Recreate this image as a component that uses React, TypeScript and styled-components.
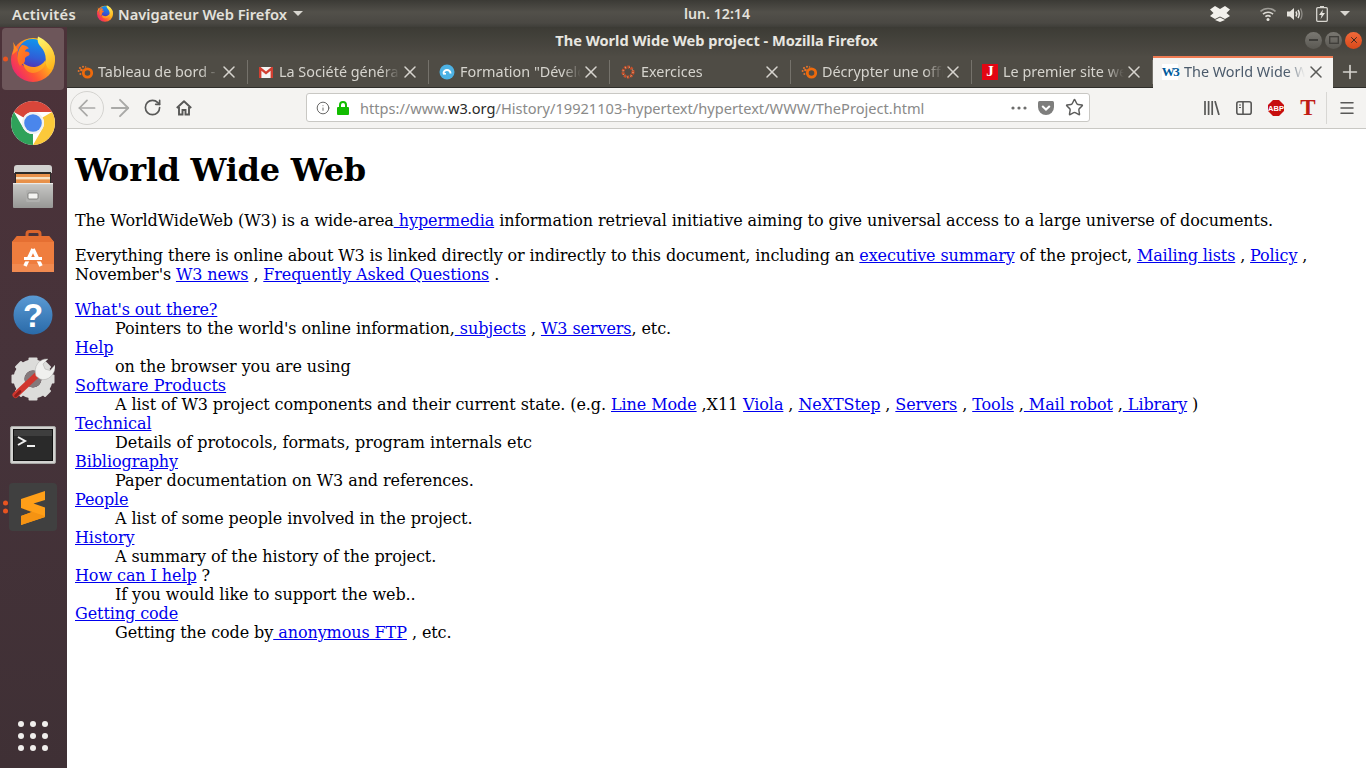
import React from "react";
import styled, { createGlobalStyle } from "styled-components";
import { ArrowLeft, ArrowRight, RotateCw, Info, Star, Menu, Plus, X } from "lucide-react";

const GlobalStyle = createGlobalStyle`
  html, body {
    margin: 0;
    padding: 0;
    height: 100%;
    overflow: hidden;
  }
`;

const UI_FONT = `"Noto Sans", "Open Sans", sans-serif`;

const Screen = styled.div`
  width: 1366px;
  height: 768px;
  display: flex;
  flex-direction: column;
  overflow: hidden;
  font-family: ${UI_FONT};
`;

const TopBar = styled.header`
  height: 27px;
  flex: none;
  display: flex;
  align-items: center;
  color: #e4e2dc;
  font-size: 14.7px;
  font-weight: 600;
  background: linear-gradient(#3b3a35 0, #52504a 45%, #4a4843 85%, #3f3e39 100%);
`;

const TopLeft = styled.div`
  flex: 0 0 684px;
  display: flex;
  align-items: center;
  padding-left: 12px;
  box-sizing: border-box;
`;

const Activities = styled.span`
  letter-spacing: 0.3px;
`;

const AppName = styled.div`
  margin-left: 21px;
  display: flex;
  align-items: center;
  gap: 5px;
`;

const Clock = styled.span`
  font-size: 14.2px;
`;

const Caret = styled.span`
  width: 0;
  height: 0;
  margin-left: ${(p: { $gap?: number }) => p.$gap ?? 0}px;
  border-left: 5px solid transparent;
  border-right: 5px solid transparent;
  border-top: 5px solid #d8d6d0;
`;

const Tray = styled.div`
  margin-left: auto;
  display: flex;
  align-items: center;
  padding-right: 13px;
`;

const Body = styled.div`
  flex: 1;
  display: flex;
  min-height: 0;
`;

const Dock = styled.nav`
  width: 67px;
  flex: none;
  box-sizing: border-box;
  padding: 1px 3px 1px 2px;
  display: flex;
  flex-direction: column;
  gap: 2px;
  background: linear-gradient(#4c3239, #46333a 50%, #3f3035);
`;

const DockItem = styled.div<{ $active?: boolean; $bottom?: boolean; $nudge?: number }>`
  position: relative;
  height: 62px;
  flex: none;
  box-sizing: border-box;
  padding-top: ${(p) => p.$nudge ?? 0}px;
  display: flex;
  align-items: center;
  justify-content: center;
  border-radius: 4px;
  margin-top: ${(p) => (p.$bottom ? "auto" : "0")};
  background: ${(p) => (p.$active ? "#6d565a" : "transparent")};
`;

const RunDots = styled.div`
  position: absolute;
  left: 0;
  top: 50%;
  transform: translateY(-50%);
  display: flex;
  flex-direction: column;
  gap: 3px;
`;

const RunDot = styled.span`
  display: block;
  width: 5px;
  height: 5px;
  margin-left: 0.5px;
  border-radius: 50%;
  background: #e95420;
`;

const AppsGrid = styled.div`
  display: grid;
  grid-template-columns: repeat(3, 6px);
  gap: 6px;
`;

const AppsDot = styled.span`
  width: 6px;
  height: 6px;
  border-radius: 50%;
  background: #f0eeec;
`;

const Window = styled.main`
  flex: 1;
  min-width: 0;
  display: flex;
  flex-direction: column;
`;

const TitleBar = styled.div`
  height: 29px;
  flex: none;
  display: grid;
  grid-template-columns: 1fr auto 1fr;
  align-items: center;
  background: linear-gradient(#3c3b35, #4e4b44);
`;

const Title = styled.div`
  color: #e8e6e0;
  font-size: 14.6px;
  font-weight: 700;
  margin-top: -4px;
`;

const WinButtons = styled.div`
  justify-self: end;
  display: flex;
  gap: 3px;
  padding-right: 4px;
  margin-top: -3px;
`;

const WinButton = styled.span<{ $close?: boolean }>`
  width: 17px;
  height: 17px;
  border-radius: 50%;
  display: flex;
  align-items: center;
  justify-content: center;
  box-sizing: border-box;
  background: ${(p) =>
    p.$close ? "linear-gradient(#f0693a, #d9491a)" : "linear-gradient(#7a7872, #5a5852)"};
`;

const TabStrip = styled.div`
  height: 32px;
  flex: none;
  display: flex;
  background: #4f4c45;
  border-bottom: 1px solid #2f2e2a;
  box-sizing: border-box;
`;

const Tab = styled.div<{ $active?: boolean }>`
  position: relative;
  flex: 0 0 ${(p) => (p.$active ? 180 : 181)}px;
  box-sizing: border-box;
  display: flex;
  align-items: center;
  padding-left: ${(p) => (p.$active ? 9 : 10)}px;
  padding-bottom: ${(p) => (p.$active ? 3 : 0)}px;
  height: ${(p) => (p.$active ? "32px" : "31px")};
  font-size: 14.4px;
  color: ${(p) => (p.$active ? "#4b5a6b" : "#d6d4ce")};
  background: ${(p) => (p.$active ? "#f4f3f1" : "transparent")};
  border-top: ${(p) => (p.$active ? "2px solid #ef7b53" : "none")};
  &::after {
    content: "";
    display: ${(p) => (p.$active ? "none" : "block")};
    position: absolute;
    right: 0;
    top: 4px;
    bottom: 3px;
    width: 1px;
    background: #75726b;
  }
`;

const TabFavicon = styled.span`
  width: 16px;
  height: 16px;
  flex: none;
  display: flex;
`;

const TabTitle = styled.span<{ $active?: boolean }>`
  margin-left: ${(p) => (p.$active ? 6 : 5)}px;
  width: 121px;
  flex: none;
  white-space: nowrap;
  overflow: hidden;
  -webkit-mask-image: linear-gradient(90deg, #000 85%, transparent 100%);
  mask-image: linear-gradient(90deg, #000 85%, transparent 100%);
`;

const TabClose = styled.span<{ $dark?: boolean }>`
  margin-left: ${(p) => (p.$dark ? 1 : 0)}px;
  display: flex;
  color: ${(p) => (p.$dark ? "#5a5a58" : "#d6d4ce")};
`;

const NewTab = styled.div`
  flex: 1;
  display: flex;
  align-items: center;
  justify-content: center;
  color: #d6d4ce;
`;

const Toolbar = styled.div`
  height: 41px;
  flex: none;
  box-sizing: border-box;
  display: flex;
  align-items: center;
  padding: 0 3px 1px 3px;
  background: #f4f3f1;
  border-bottom: 1px solid #c9c8c4;
`;

const ToolButton = styled.span<{ $muted?: boolean; $round?: boolean }>`
  width: ${(p) => (p.$round ? "34px" : "32px")};
  height: ${(p) => (p.$round ? "34px" : "32px")};
  flex: none;
  box-sizing: border-box;
  display: flex;
  align-items: center;
  justify-content: center;
  border-radius: 50%;
  border: ${(p) => (p.$round ? "1px solid #d4d3d0" : "none")};
  color: ${(p) => (p.$muted ? "#a9a9a7" : "#585857")};
`;

const UrlBar = styled.div`
  width: 784px;
  height: 29px;
  margin: 0 106px;
  flex: none;
  box-sizing: border-box;
  display: flex;
  align-items: center;
  background: #fff;
  border: 1px solid #c9c8c4;
  border-radius: 3px;
  padding-left: 9px;
  color: #5c5c5b;
`;

const UrlGap = styled.span`
  width: 7px;
  flex: none;
`;

const UrlText = styled.span`
  margin-left: 11px;
  font-size: 14.6px;
  color: #8a8a89;
  white-space: nowrap;
`;

const UrlHost = styled.span`
  color: #2a2a2a;
`;

const UrlActions = styled.div`
  margin-left: auto;
  display: flex;
  align-items: center;
  gap: 11px;
  padding-right: 5px;
`;

const ToolSeparator = styled.span`
  width: 1px;
  height: 32px;
  flex: none;
  margin-left: 2px;
  margin-right: 4px;
  background: #d8d7d4;
`;

const Page = styled.article`
  flex: 1;
  background: #fff;
  color: #000;
  padding: 0.1px 8px;
  font-family: "DejaVu Serif", serif;
  font-size: 16px;
  letter-spacing: -0.085px;
  min-height: 0;
  overflow: hidden;
`;

const Heading = styled.h1`
  font-size: 32px;
  font-weight: 700;
  letter-spacing: -0.27px;
  margin: 21.44px 0 22.44px;
`;

const Para = styled.p<{ $tracking?: number }>`
  margin: 16px 0;
  letter-spacing: ${(p) => p.$tracking ?? -0.085}px;
`;

const Link = styled.a`
  color: #0000ee;
  text-decoration: underline;
`;

const Topics = styled.dl`
  margin: 16px 0;
`;

const Term = styled.dt<{ $tracking?: number }>`
  letter-spacing: ${(p) => p.$tracking ?? -0.085}px;
`;

const Desc = styled.dd<{ $tracking?: number }>`
  margin-left: 40px;
  letter-spacing: ${(p) => p.$tracking ?? -0.085}px;
`;

const FirefoxLogo = ({ size, uid }: { size: number; uid: string }) => (
  <svg width={size} height={(size * 46) / 44} viewBox="0 0 44 46">
    <defs>
      <linearGradient id={`${uid}a`} x1="0.95" y1="0.15" x2="0.1" y2="0.8">
        <stop offset="0" stopColor="#ffdc24" />
        <stop offset="0.4" stopColor="#ffa41e" />
        <stop offset="0.72" stopColor="#ff5434" />
        <stop offset="1" stopColor="#ee2a6a" />
      </linearGradient>
      <linearGradient id={`${uid}b`} x1="0.6" y1="0" x2="0.4" y2="1">
        <stop offset="0" stopColor="#0f96ee" />
        <stop offset="0.6" stopColor="#2f5fd8" />
        <stop offset="1" stopColor="#5a2cae" />
      </linearGradient>
      <linearGradient id={`${uid}c`} x1="0.3" y1="0" x2="0.6" y2="1">
        <stop offset="0" stopColor="#fff36a" />
        <stop offset="1" stopColor="#ffb81e" />
      </linearGradient>
      <linearGradient id={`${uid}d`} x1="0" y1="0" x2="1" y2="1">
        <stop offset="0" stopColor="#ff8a1e" />
        <stop offset="1" stopColor="#ff5a2a" />
      </linearGradient>
      <linearGradient id={`${uid}e`} x1="1" y1="0" x2="0" y2="1">
        <stop offset="0" stopColor="#ffc020" />
        <stop offset="1" stopColor="#ff7a24" />
      </linearGradient>
    </defs>
    <circle cx="22" cy="24" r="22" fill={`url(#${uid}a)`} />
    <path d="M2 6C3 10 3 14 1 19L7 14Z" fill="#ff8a24" />
    <circle cx="21.5" cy="18" r="15" fill={`url(#${uid}b)`} />
    <path d="M11 9C14 9 16.5 10.5 18 12.5C15.5 12.5 14 14 14 15.5C16.5 15 19 16 18.5 18.5C18 20 15.5 20 14 22C14 24 14 26 13 27L9 30C5 24 6 14 11 9Z" fill={`url(#${uid}d)`} />
    <path d="M12 27C16 30 20 31.5 24 31C28 30.5 32 28 34.5 24C35 31 30 36 22 37C17 37 13 33 12 27Z" fill={`url(#${uid}e)`} />
    <path d="M27 0.5C26 5 27 8 30 11C33.5 15 35.5 20 34.5 27C36 32 38 34 40 33C43 29 44.3 25 43.7 21C42 11 35 4 27 0.5Z" fill={`url(#${uid}c)`} />
  </svg>
);

const ChromeLogo = () => {
  const sector = "M5 13A22 22 0 0 1 43 13L24 13A11 11 0 0 0 14.5 18.5Z";
  return (
    <svg width="48" height="48" viewBox="0 0 48 48">
      <circle cx="24" cy="24" r="22" fill="#fff" />
      <path d={sector} fill="#d8463a" />
      <path d={sector} fill="#fbc93a" transform="rotate(120 24 24)" />
      <path d={sector} fill="#2fa25a" transform="rotate(240 24 24)" />
      <circle cx="24" cy="24" r="11" fill="#f1f1f1" />
      <circle cx="24" cy="24" r="8.8" fill="#4a86ec" />
    </svg>
  );
};

const FilesIcon = () => (
  <svg width="42" height="44" viewBox="0 0 42 44">
    <defs>
      <linearGradient id="cab" x1="0" y1="0" x2="0" y2="1">
        <stop offset="0" stopColor="#c9c9c7" />
        <stop offset="1" stopColor="#979795" />
      </linearGradient>
    </defs>
    <path d="M2 3Q2 0 5 0H37Q40 0 40 3V8H2Z" fill="#d2d2d0" />
    <rect x="3" y="7" width="36" height="12" fill="#2c2a28" />
    <rect x="4" y="9" width="34" height="9" fill="#e8914a" />
    <rect x="4" y="12" width="34" height="2.4" fill="#f8e2c4" />
    <rect x="1" y="18" width="40" height="25" rx="1" fill="url(#cab)" />
    <rect x="1" y="18" width="40" height="1.2" fill="#ebebe9" />
    <rect x="14" y="25" width="14" height="12" rx="1.5" fill="#b0b0ae" />
    <rect x="16" y="28" width="10" height="6" rx="1" fill="#f3f3f1" stroke="#6f6f6d" strokeWidth="0.8" />
  </svg>
);

const SoftwareIcon = () => (
  <svg width="42" height="43" viewBox="0 0 42 43">
    <path d="M15 12V4Q15 1.5 17.5 1.5H25.5Q28 1.5 28 4V12" fill="none" stroke="#d9642c" strokeWidth="3" />
    <path d="M5 6H37L42 12V42H0V12Z" fill="#ef7d3e" />
    <path d="M5 6H37L42 12H0Z" fill="#e56f32" />
    <path d="M0 34H42V42H0Z" fill="#f18a50" />
    <path d="M21 19L13 36M21 19L29 36" stroke="#fff" strokeWidth="3.6" fill="none" />
    <rect x="12" y="27" width="18" height="3" fill="#fff" />
    <rect x="10" y="30" width="22" height="1.4" fill="#ef7d3e" />
  </svg>
);

const HelpIcon = () => (
  <svg width="40" height="40" viewBox="0 0 40 40">
    <defs>
      <linearGradient id="hlp" x1="0" y1="0" x2="0" y2="1">
        <stop offset="0" stopColor="#5a9ad4" />
        <stop offset="1" stopColor="#2a6aa8" />
      </linearGradient>
    </defs>
    <circle cx="20" cy="20" r="19.5" fill="url(#hlp)" />
    <text x="20" y="32" textAnchor="middle" fontFamily="Liberation Sans, sans-serif" fontWeight="700" fontSize="33" fill="#fff">?</text>
  </svg>
);

const ToolsIcon = () => {
  const teeth = [0, 45, 90, 135, 180, 225, 270, 315];
  return (
    <svg width="44" height="44" viewBox="0 0 44 44">
      {teeth.map((a) => (
        <rect key={a} x="17.5" y="0.5" width="9" height="9" rx="1" fill="#dcdcda" transform={`rotate(${a} 22 22)`} />
      ))}
      <circle cx="22" cy="22" r="14" fill="none" stroke="#dcdcda" strokeWidth="11" />
      <circle cx="22" cy="22" r="8.5" fill="#84797b" />
      <path d="M4.5 38L28 16" stroke="#d1372f" strokeWidth="6" strokeLinecap="round" />
      <path d="M4.5 39L9 34.5" stroke="#8c1f1c" strokeWidth="2.6" strokeLinecap="round" />
      <path d="M25 19C22 10 28 1 37 2L32 7L34 12L39 13.5L44 8C45 17 37 25 29 22Z" fill="#f0f0ee" stroke="#a8a8a6" strokeWidth="0.5" />
    </svg>
  );
};

const TerminalIcon = () => (
  <svg width="46" height="38" viewBox="0 0 46 38">
    <rect x="0.5" y="0.5" width="45" height="37" rx="1.5" fill="#d2d2d0" stroke="#a8a8a6" />
    <rect x="3.5" y="3.5" width="39" height="31" fill="#2a2a2a" stroke="#111" />
    <rect x="4" y="4" width="38" height="6" fill="#3e3e3e" />
    <path d="M8 11L15 15L8 19" fill="none" stroke="#f0f0f0" strokeWidth="2" />
    <rect x="17" y="19" width="8" height="2" fill="#f0f0f0" />
  </svg>
);

const SublimeIcon = () => (
  <svg width="48" height="48" viewBox="0 0 48 48">
    <rect width="48" height="48" rx="4" fill="#404040" />
    <path d="M36 8V17L24.5 20.5L36 24.5V34L12 42V33L23 29L12 25V16Z" fill="#ff9f18" />
    <path d="M12 25L36 33V34L12 42V33L23 29Z" fill="#f59312" />
  </svg>
);

const SplashRing = () => (
  <svg width="16" height="16" viewBox="0 0 16 16">
    <circle cx="10.5" cy="9" r="4.2" fill="none" stroke="#ee6a0c" strokeWidth="2.8" />
    <g fill="#e8742a">
      <circle cx="3" cy="4" r="1.1" />
      <circle cx="6" cy="2.8" r="1" />
      <circle cx="1.6" cy="7" r="1" />
      <circle cx="4.4" cy="6" r="1.3" />
      <circle cx="3.4" cy="10" r="1" />
      <circle cx="8.6" cy="3" r="0.8" />
    </g>
  </svg>
);

const GmailIcon = () => (
  <svg width="16" height="16" viewBox="0 0 16 16">
    <rect x="1" y="3" width="14" height="11" fill="#f4f4f4" />
    <path d="M1 14V3H2.6L8 7.5L13.4 3H15V14H12.6V6.8L8 10.4L3.4 6.8V14Z" fill="#d23f31" />
  </svg>
);

const FormationIcon = () => (
  <svg width="16" height="16" viewBox="0 0 16 16">
    <circle cx="8" cy="8" r="7.5" fill="#4db2e4" />
    <path d="M4.5 9.5A3.5 3.5 0 0 1 11.5 9.5" fill="none" stroke="#fff" strokeWidth="2" />
    <rect x="4" y="9" width="3" height="1.6" fill="#fff" />
  </svg>
);

const ExercicesIcon = () => (
  <svg width="16" height="16" viewBox="0 0 16 16">
    <circle cx="8" cy="8" r="5" fill="none" stroke="#c9502a" strokeWidth="3" strokeDasharray="2.2 1" />
    <circle cx="8" cy="8" r="5" fill="none" stroke="#e8c9a0" strokeWidth="1" strokeDasharray="1 3" />
  </svg>
);

const JournalBadge = styled.span`
  width: 16px;
  height: 16px;
  display: flex;
  align-items: center;
  justify-content: center;
  background: #e30613;
  color: #fff;
  font: 700 15px "Liberation Serif", serif;
`;

const W3Badge = styled.span`
  width: 16px;
  height: 16px;
  display: flex;
  align-items: center;
  justify-content: center;
  background: #fff;
  color: #005a9c;
  font: 700 13px "Liberation Serif", serif;
  letter-spacing: -1.5px;
`;

const TrayIcon = styled.span<{ $width: number; $after?: number }>`
  width: ${(p) => p.$width}px;
  margin-right: ${(p) => p.$after ?? 0}px;
  display: flex;
  justify-content: center;
`;

const BoxIcon = () => (
  <svg width="20" height="16" viewBox="0 0 20 16">
    <path d="M0 3.5L5 0L10 3L15 0L20 3.5L16.5 7L20 10L15 13L10 10.5L5 13L0 10L3.5 7Z" fill="#f2f0eb" />
    <path d="M5 14L10 11.5L15 14L10 16Z" fill="#f2f0eb" />
  </svg>
);

const WifiIcon = () => (
  <svg width="16" height="14" viewBox="0 0 16 14">
    <path d="M0.5 4.5C4.5 0.5 11.5 0.5 15.5 4.5" fill="none" stroke="#9d9b95" strokeWidth="1.6" />
    <path d="M3 7.2C5.8 4.6 10.2 4.6 13 7.2" fill="none" stroke="#dcdad4" strokeWidth="1.6" />
    <path d="M5.4 9.7C6.9 8.4 9.1 8.4 10.6 9.7" fill="none" stroke="#dcdad4" strokeWidth="1.6" />
    <circle cx="8" cy="12.4" r="1.5" fill="#e6e4de" />
  </svg>
);

const VolumeIcon = () => (
  <svg width="16" height="14" viewBox="0 0 16 14">
    <path d="M0 4.5H3L7 1V13L3 9.5H0Z" fill="#e6e4de" />
    <path d="M9 4.5Q10.5 7 9 9.5" fill="none" stroke="#e6e4de" strokeWidth="1.5" />
    <path d="M11 3Q13.5 7 11 11" fill="none" stroke="#e6e4de" strokeWidth="1.5" />
    <path d="M13.5 1.5Q16.5 7 13.5 12.5" fill="none" stroke="#8f8d87" strokeWidth="1.3" />
  </svg>
);

const BatteryIcon = () => (
  <svg width="12" height="16" viewBox="0 0 12 16">
    <rect x="4" y="0" width="4" height="2" fill="#d8d6d0" />
    <rect x="0.7" y="1.7" width="10.6" height="13.6" rx="1" fill="none" stroke="#d8d6d0" strokeWidth="1.3" />
    <path d="M7 3.5L3 9H5.6L4.6 13L9 7H6.3Z" fill="#e6e4de" />
  </svg>
);

const LockIcon = () => (
  <svg width="12" height="14" viewBox="0 0 12 14">
    <path d="M3 6V4A3 3 0 0 1 9 4V6" fill="none" stroke="#12bc00" strokeWidth="2" />
    <rect x="0" y="6" width="12" height="8" rx="1" fill="#12bc00" />
  </svg>
);

const HomeIcon = () => (
  <svg width="16" height="16" viewBox="0 0 16 16">
    <path d="M0.8 8L8 1.2L15.2 8" fill="none" stroke="#585857" strokeWidth="1.9" strokeLinejoin="round" />
    <path d="M3 7V14.5H6.5V10H9.5V14.5H13V7" fill="none" stroke="#585857" strokeWidth="1.9" />
  </svg>
);

const LibraryIcon = () => (
  <svg width="16" height="14" viewBox="0 0 16 14">
    <path d="M1 0V14M4.6 0V14M8.2 0V14M11 0L15 14" stroke="#585857" strokeWidth="1.7" fill="none" />
  </svg>
);

const SidebarIcon = () => (
  <svg width="16" height="14" viewBox="0 0 16 14">
    <rect x="0.8" y="0.8" width="14.4" height="12.4" rx="2" fill="none" stroke="#585857" strokeWidth="1.6" />
    <path d="M7 1V13" stroke="#585857" strokeWidth="1.6" />
    <path d="M3 4H5M3 6.5H5" stroke="#585857" strokeWidth="1.2" />
  </svg>
);

const AdblockIcon = () => (
  <svg width="16" height="16" viewBox="0 0 16 16">
    <path d="M5 0H11L16 5V11L11 16H5L0 11V5Z" fill="#c70d0d" />
    <text x="8" y="10.8" textAnchor="middle" fontFamily="Liberation Sans, sans-serif" fontWeight="700" fontSize="7.5" fill="#fff">ABP</text>
  </svg>
);

const SerifT = styled.span`
  color: #c01c14;
  font: 700 23px "Liberation Serif", serif;
  line-height: 23px;
`;

const PocketIcon = () => (
  <svg width="16" height="14" viewBox="0 0 16 14">
    <path d="M1.5 0H14.5Q16 0 16 1.5V6A8 8 0 0 1 0 6V1.5Q0 0 1.5 0Z" fill="#7e7e7d" />
    <path d="M4.2 5L8 8.6L11.8 5" fill="none" stroke="#fff" strokeWidth="2" />
  </svg>
);

const MoreDots = () => (
  <svg width="16" height="4" viewBox="0 0 16 4">
    <circle cx="2" cy="2" r="1.6" fill="#6d6d6c" />
    <circle cx="8" cy="2" r="1.6" fill="#6d6d6c" />
    <circle cx="14" cy="2" r="1.6" fill="#6d6d6c" />
  </svg>
);

const tabs = [
  { title: "Tableau de bord - OpenClassrooms", icon: <SplashRing /> },
  { title: "La Société générale", icon: <GmailIcon /> },
  { title: 'Formation "Développeur', icon: <FormationIcon /> },
  { title: "Exercices", icon: <ExercicesIcon /> },
  { title: "Décrypter une offre", icon: <SplashRing /> },
  { title: "Le premier site web", icon: <JournalBadge>J</JournalBadge> },
];

const App = () => {
  return (
    <Screen>
      <GlobalStyle />
      <TopBar>
        <TopLeft>
          <Activities>Activités</Activities>
          <AppName>
            <FirefoxLogo size={16} uid="ffsmall" />
            Navigateur Web Firefox
            <Caret $gap={1} />
          </AppName>
        </TopLeft>
        <Clock>lun. 12:14</Clock>
        <Tray>
          <TrayIcon $width={20} $after={23}><BoxIcon /></TrayIcon>
          <TrayIcon $width={30}><WifiIcon /></TrayIcon>
          <TrayIcon $width={24}><VolumeIcon /></TrayIcon>
          <TrayIcon $width={30}><BatteryIcon /></TrayIcon>
          <TrayIcon $width={16}><Caret /></TrayIcon>
        </Tray>
      </TopBar>
      <Body>
        <Dock>
          <DockItem $active>
            <RunDots><RunDot /></RunDots>
            <FirefoxLogo size={44} uid="ffdock" />
          </DockItem>
          <DockItem><ChromeLogo /></DockItem>
          <DockItem><FilesIcon /></DockItem>
          <DockItem><SoftwareIcon /></DockItem>
          <DockItem><HelpIcon /></DockItem>
          <DockItem><ToolsIcon /></DockItem>
          <DockItem $nudge={4}><TerminalIcon /></DockItem>
          <DockItem>
            <RunDots><RunDot /><RunDot /></RunDots>
            <SublimeIcon />
          </DockItem>
          <DockItem $bottom>
            <AppsGrid>
              {Array.from({ length: 9 }, (_, i) => <AppsDot key={i} />)}
            </AppsGrid>
          </DockItem>
        </Dock>
        <Window>
          <TitleBar>
            <span />
            <Title>The World Wide Web project - Mozilla Firefox</Title>
            <WinButtons>
              <WinButton>
                <svg width="9" height="2"><rect width="9" height="2" fill="#3f3e3a" /></svg>
              </WinButton>
              <WinButton>
                <svg width="10" height="8"><rect x="0.7" y="0.7" width="8.6" height="6.6" fill="none" stroke="#3f3e3a" strokeWidth="1.3" /></svg>
              </WinButton>
              <WinButton $close>
                <X size={10} color="#3f2a20" strokeWidth={2.4} />
              </WinButton>
            </WinButtons>
          </TitleBar>
          <TabStrip>
            {tabs.map((t) => (
              <Tab key={t.title}>
                <TabFavicon>{t.icon}</TabFavicon>
                <TabTitle>{t.title}</TabTitle>
                <TabClose><X size={20} strokeWidth={1.8} /></TabClose>
              </Tab>
            ))}
            <Tab $active>
              <TabFavicon><W3Badge>W3</W3Badge></TabFavicon>
              <TabTitle $active>The World Wide Web project</TabTitle>
              <TabClose $dark><X size={20} strokeWidth={1.8} /></TabClose>
            </Tab>
            <NewTab><Plus size={22} strokeWidth={1.8} /></NewTab>
          </TabStrip>
          <Toolbar>
            <ToolButton $round $muted><ArrowLeft size={26} strokeWidth={1.6} /></ToolButton>
            <ToolButton $muted><ArrowRight size={28} strokeWidth={1.6} /></ToolButton>
            <ToolButton><RotateCw size={19} strokeWidth={2.1} /></ToolButton>
            <ToolButton><HomeIcon /></ToolButton>
            <UrlBar>
              <Info size={14} strokeWidth={1.6} />
              <UrlGap />
              <LockIcon />
              <UrlText>https://www.<UrlHost>w3.org</UrlHost>/History/19921103-hypertext/hypertext/WWW/TheProject.html</UrlText>
              <UrlActions>
                <MoreDots />
                <PocketIcon />
                <Star size={19} strokeWidth={1.8} />
              </UrlActions>
            </UrlBar>
            <ToolButton><LibraryIcon /></ToolButton>
            <ToolButton><SidebarIcon /></ToolButton>
            <ToolButton><AdblockIcon /></ToolButton>
            <ToolButton><SerifT>T</SerifT></ToolButton>
            <ToolSeparator />
            <ToolButton><Menu size={18} strokeWidth={2} /></ToolButton>
          </Toolbar>
          <Page>
            <Heading>World Wide Web</Heading>
            <Para>
              The WorldWideWeb (W3) is a wide-area<Link> hypermedia</Link> information retrieval initiative aiming to give universal access to a large universe of documents.
            </Para>
            <Para $tracking={-0.13}>
              Everything there is online about W3 is linked directly or indirectly to this document, including an <Link>executive summary</Link> of the project, <Link>Mailing lists</Link> , <Link>Policy</Link> , November's <Link>W3 news</Link> , <Link>Frequently Asked Questions</Link> .
            </Para>
            <Topics>
              <Term><Link>What's out there?</Link></Term>
              <Desc>Pointers to the world's online information,<Link> subjects</Link> , <Link>W3 servers</Link>, etc.</Desc>
              <Term><Link>Help</Link></Term>
              <Desc>on the browser you are using</Desc>
              <Term $tracking={0.03}><Link>Software Products</Link></Term>
              <Desc>A list of W3 project components and their current state. (e.g. <Link>Line Mode</Link> ,X11 <Link>Viola</Link> , <Link>NeXTStep</Link> , <Link>Servers</Link> , <Link>Tools</Link> ,<Link> Mail robot</Link> ,<Link> Library</Link> )</Desc>
              <Term><Link>Technical</Link></Term>
              <Desc $tracking={-0.025}>Details of protocols, formats, program internals etc</Desc>
              <Term><Link>Bibliography</Link></Term>
              <Desc>Paper documentation on W3 and references.</Desc>
              <Term><Link>People</Link></Term>
              <Desc>A list of some people involved in the project.</Desc>
              <Term><Link>History</Link></Term>
              <Desc>A summary of the history of the project.</Desc>
              <Term><Link>How can I help</Link> ?</Term>
              <Desc>If you would like to support the web..</Desc>
              <Term><Link>Getting code</Link></Term>
              <Desc>Getting the code by<Link> anonymous FTP</Link> , etc.</Desc>
            </Topics>
          </Page>
        </Window>
      </Body>
    </Screen>
  );
};

export default App;
